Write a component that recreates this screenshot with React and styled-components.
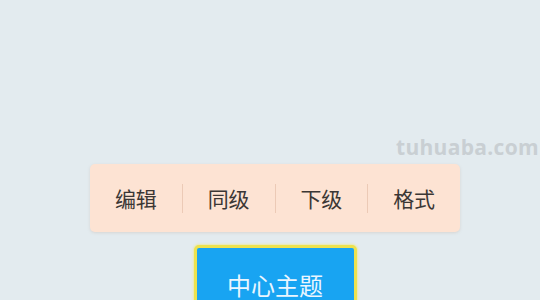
import React from "react";
import styled, { createGlobalStyle } from "styled-components";

const Global = createGlobalStyle`
  html, body { margin: 0; padding: 0; }
  body {
    width: 540px; height: 300px; overflow: hidden;
    background: #e3ebef;
    font-family: "Noto Sans CJK SC", "Noto Sans", sans-serif;
  }
`;

const Canvas = styled.div`
  position: relative;
  width: 540px;
  height: 300px;
  overflow: hidden;
  background: #e3ebef;
`;

const Watermark = styled.div`
  position: absolute;
  left: 396px;
  top: 133px;
  font-family: "Open Sans", "DejaVu Sans", sans-serif;
  font-weight: 700;
  font-size: 21px;
  letter-spacing: 0.3px;
  color: #c9cfd3;
`;

const Stack = styled.div`
  display: flex;
  flex-direction: column;
  align-items: center;
  padding-top: 164px;
  padding-left: 10px;
  gap: 13px;
`;

const Toolbar = styled.div`
  display: flex;
  align-items: center;
  width: 370px;
  height: 68px;
  background: #fde3d3;
  border-radius: 5px;
  box-shadow: 0 1px 3px rgba(180, 150, 130, 0.25);
`;

const Item = styled.div`
  flex: 1;
  text-align: center;
  font-size: 21px;
  color: #3b3735;
  line-height: 68px;
`;

const Sep = styled.div`
  width: 1px;
  height: 29px;
  background: #eccab6;
`;

const Node = styled.div`
  width: 163px;
  height: 70px;
  box-sizing: border-box;
  border: 3px solid #ede24e;
  border-radius: 5px;
  background: #18a4f2;
  box-shadow: 0 0 2px 1px rgba(240, 230, 120, 0.6);
  display: flex;
  justify-content: center;
  padding-top: 21px;
  color: #eaf6ff;
  font-size: 24px;
  line-height: 32px;
`;

const items = ["编辑", "同级", "下级", "格式"];

export default function App() {
  return (
    <Canvas>
      <Global />
      <Watermark>tuhuaba.com</Watermark>
      <Stack>
        <Toolbar>
          {items.map((t, i) => (
            <React.Fragment key={t}>
              {i > 0 && <Sep />}
              <Item>{t}</Item>
            </React.Fragment>
          ))}
        </Toolbar>
        <Node>中心主题</Node>
      </Stack>
    </Canvas>
  );
}
